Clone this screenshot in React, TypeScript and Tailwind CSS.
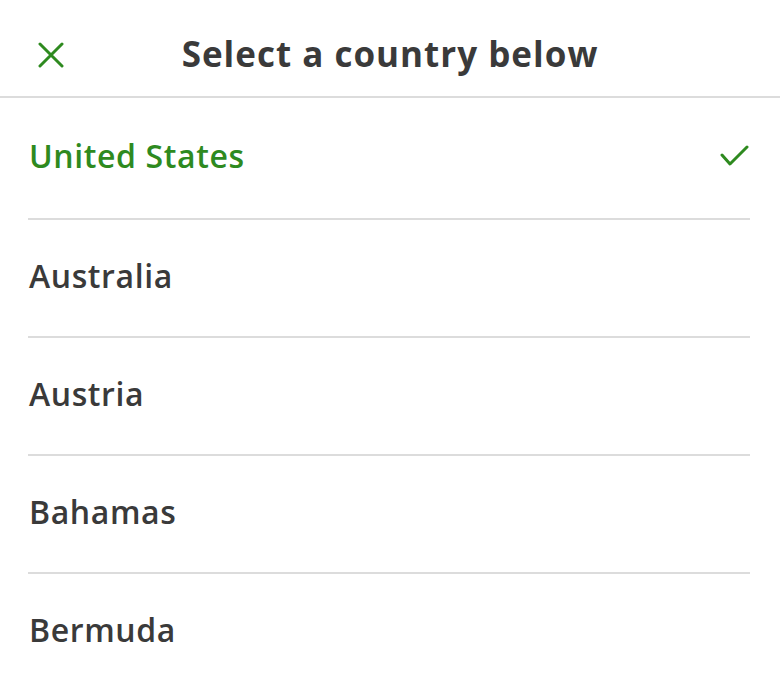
import React from 'react';

const COUNTRIES = ['United States', 'Australia', 'Austria', 'Bahamas', 'Bermuda'];

const CloseIcon = () => (
  <svg width="26" height="26" viewBox="0 0 26 26" fill="none" stroke="#2e8a1f" strokeWidth="3" strokeLinecap="round">
    <path d="M2 2 L24 24 M24 2 L2 24" />
  </svg>
);

const CheckIcon = () => (
  <svg width="30" height="22" viewBox="0 0 30 22" fill="none" stroke="#2e8a1f" strokeWidth="3" strokeLinecap="round" strokeLinejoin="round">
    <path d="M2 10 L10 19 L27 2" />
  </svg>
);

const App: React.FC = () => {
  const selected = 'United States';
  return (
    <div className="w-[780px] h-[680px] bg-white overflow-hidden font-['Open_Sans','Noto_Sans',sans-serif]">
      <header className="relative h-[98px] flex items-center justify-center pt-[12px] border-b-2 border-[#dcdcdc]">
        <button className="absolute left-[38px] top-[42px]">
          <CloseIcon />
        </button>
        <h1 className="text-[35px] font-bold text-[#3a3a3a] tracking-[1px]">Select a country below</h1>
      </header>
      <ul className="pl-[28px] pr-[30px]">
        {COUNTRIES.map((name) => (
          <li
            key={name}
            className={`flex items-center justify-between h-[118px] pb-[4px] border-b-2 border-[#dcdcdc] first:h-[122px] ${
              name === selected ? 'text-[#2e8a1f]' : 'text-[#3a3a3a]'
            }`}
          >
            <span className="text-[32px] font-semibold tracking-[0.6px] pl-[1px]">{name}</span>
            {name === selected && <CheckIcon />}
          </li>
        ))}
      </ul>
    </div>
  );
};

export default App;
